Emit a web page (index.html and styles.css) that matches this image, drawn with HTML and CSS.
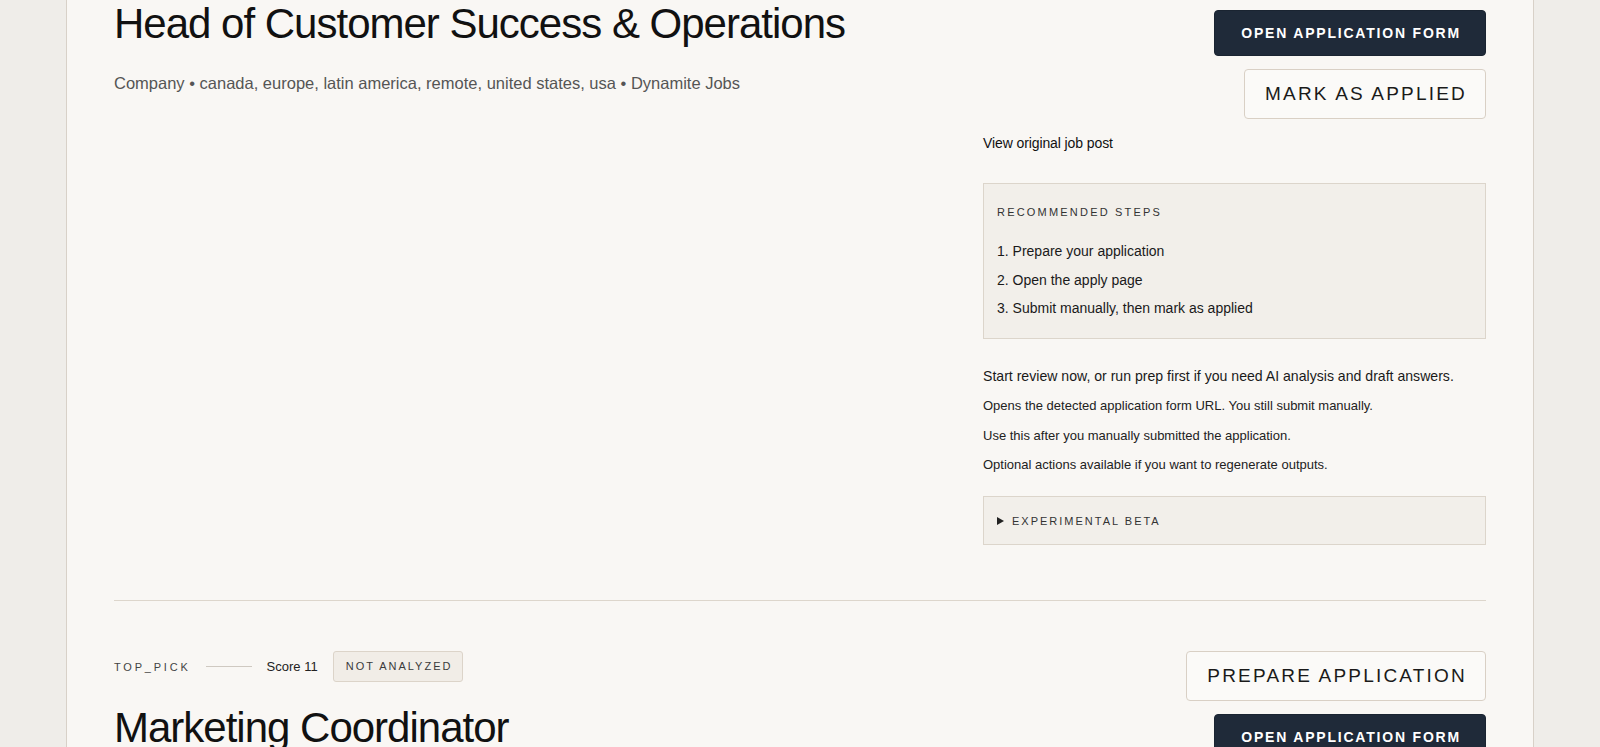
FILE: index.html
```html
<!DOCTYPE html>
<html lang="en">
<head>
<meta charset="utf-8">
<title>Job queue</title>
<link rel="stylesheet" href="styles.css">
</head>
<body>
<div class="page">
  <div class="card">
    <section class="job">
      <div class="job-main">
        <div class="job-tags">
          <span class="tier">TOP_PICK</span>
          <span class="rule"></span>
          <span class="score">Score 12</span>
          <span class="badge">NOT ANALYZED</span>
        </div>
        <h2 class="job-title">Head of Customer Success &amp; Operations</h2>
        <p class="job-meta">Company • canada, europe, latin america, remote, united states, usa • Dynamite Jobs</p>
      </div>
      <aside class="job-actions">
        <div class="btn-stack">
          <button class="btn btn-outline">Prepare application</button>
          <button class="btn btn-dark">Open application form</button>
          <button class="btn btn-outline">Mark as applied</button>
        </div>
        <a class="job-link" href="#">View original job post</a>
        <div class="steps">
          <div class="steps-title">Recommended steps</div>
          <ol class="steps-list">
            <li>1. Prepare your application</li>
            <li>2. Open the apply page</li>
            <li>3. Submit manually, then mark as applied</li>
          </ol>
        </div>
        <p class="hint-lead">Start review now, or run prep first if you need AI analysis and draft answers.</p>
        <p class="hint">Opens the detected application form URL. You still submit manually.</p>
        <p class="hint">Use this after you manually submitted the application.</p>
        <p class="hint">Optional actions available if you want to regenerate outputs.</p>
        <details class="beta">
          <summary>Experimental beta</summary>
        </details>
      </aside>
    </section>

    <section class="job">
      <div class="job-main">
        <div class="job-tags">
          <span class="tier">TOP_PICK</span>
          <span class="rule"></span>
          <span class="score">Score 11</span>
          <span class="badge">NOT ANALYZED</span>
        </div>
        <h2 class="job-title">Marketing Coordinator</h2>
        <p class="job-meta">Company • remote, united states • Dynamite Jobs</p>
      </div>
      <aside class="job-actions">
        <div class="btn-stack">
          <button class="btn btn-outline">Prepare application</button>
          <button class="btn btn-dark">Open application form</button>
          <button class="btn btn-outline">Mark as applied</button>
        </div>
        <a class="job-link" href="#">View original job post</a>
      </aside>
    </section>
  </div>
</div>
</body>
</html>
```

FILE: styles.css
```css
html, body {
  margin: 0;
  padding: 0;
}

body {
  height: 100vh;
  overflow: hidden;
  background: #efede9;
  color: #111;
  font-family: "Liberation Sans", Arial, sans-serif;
}

.page {
  padding: 0 66px;
}

.card {
  margin-top: -104px;
  background: #f9f7f4;
  border: 1px solid #d8d1c8;
  padding: 0 47px;
}

.job {
  display: grid;
  grid-template-columns: 1fr 503px;
  column-gap: 40px;
  align-items: start;
  padding: 50px 0 55px;
}

.job + .job {
  border-top: 1px solid #ddd6cc;
}

/* left column */
.job-tags {
  display: flex;
  align-items: center;
  gap: 15px;
  height: 31px;
}

.tier {
  font-size: 11px;
  letter-spacing: 2.8px;
  color: #444;
}

.rule {
  width: 46px;
  height: 1px;
  background: #cfc9c1;
}

.score {
  font-size: 13px;
  color: #222;
}

.badge {
  font-size: 11px;
  line-height: 14px;
  letter-spacing: 2px;
  color: #3a3a3a;
  background: #f1ede7;
  border: 1px solid #dcd4c9;
  border-radius: 3px;
  padding: 7px 10px 8px 12px;
}

.job-title {
  margin: 23px 0 0;
  font-size: 42px;
  line-height: 46px;
  font-weight: 400;
  letter-spacing: -1px;
  color: #111;
}

.job-meta {
  margin: 24px 0 0;
  font-size: 16.5px;
  line-height: 24px;
  color: #555;
}

/* right column */
.job-actions {
  display: flex;
  flex-direction: column;
}

.btn-stack {
  display: flex;
  flex-direction: column;
  align-items: flex-end;
  gap: 13px;
}

.btn {
  font-family: "Liberation Sans", Arial, sans-serif;
  text-transform: uppercase;
  border-radius: 4px;
  cursor: pointer;
}

.btn-outline {
  background: #fbfaf8;
  color: #1a1a1a;
  border: 1px solid #d9d0c5;
  font-size: 19px;
  line-height: 22px;
  letter-spacing: 2.2px;
  padding: 13px 18px 13px 20px;
}

.btn-dark {
  background: #1f2a39;
  color: #fff;
  border: 1px solid #1a2431;
  font-size: 14px;
  font-weight: 700;
  line-height: 18px;
  letter-spacing: 1.8px;
  padding: 13px 24px 13px 26px;
}

.job-link {
  margin-top: 14px;
  font-size: 14px;
  line-height: 20px;
  color: #111;
  text-decoration: none;
  letter-spacing: -0.1px;
}

.steps {
  margin-top: 30px;
  background: #f2efea;
  border: 1px solid #dcd5cb;
  padding: 20px 13px 15px;
}

.steps-title {
  font-size: 11px;
  line-height: 16px;
  letter-spacing: 2.2px;
  text-transform: uppercase;
  color: #333;
}

.steps-list {
  list-style: none;
  margin: 17px 0 0;
  padding: 0;
}

.steps-list li {
  font-size: 14px;
  line-height: 28.5px;
  color: #1a1a1a;
}

.hint-lead {
  margin: 27px 0 0;
  font-size: 14.1px;
  line-height: 20px;
  color: #1a1a1a;
}

.hint {
  margin: 11.5px 0 0;
  font-size: 13px;
  line-height: 18px;
  color: #222;
}

.beta {
  margin-top: 22px;
  background: #f2efea;
  border: 1px solid #dcd5cb;
}

.beta summary {
  list-style: none;
  display: flex;
  align-items: center;
  gap: 8px;
  padding: 16.5px 13px;
  font-size: 11px;
  line-height: 14px;
  letter-spacing: 2px;
  text-transform: uppercase;
  color: #333;
  cursor: pointer;
}

.beta summary::-webkit-details-marker {
  display: none;
}

.beta summary::before {
  content: "";
  width: 0;
  height: 0;
  border-top: 4px solid transparent;
  border-bottom: 4px solid transparent;
  border-left: 7px solid #222;
}
```
